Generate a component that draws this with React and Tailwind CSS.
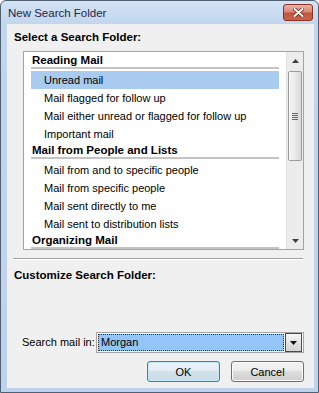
import React from "react";

const groups = [
  {
    title: "Reading Mail",
    items: [
      "Unread mail",
      "Mail flagged for follow up",
      "Mail either unread or flagged for follow up",
      "Important mail",
    ],
  },
  {
    title: "Mail from People and Lists",
    items: [
      "Mail from and to specific people",
      "Mail from specific people",
      "Mail sent directly to me",
      "Mail sent to distribution lists",
    ],
  },
  { title: "Organizing Mail", items: [] },
];

function Arrow({ down }) {
  return (
    <svg width="7" height="4" viewBox="0 0 7 4">
      {down ? <polygon points="0,0 7,0 3.5,4" fill="#3e3e3e" /> : <polygon points="0,4 7,4 3.5,0" fill="#3e3e3e" />}
    </svg>
  );
}

function Scrollbar() {
  return (
    <div className="flex w-[17px] flex-col border-l border-[#e2e2e2] bg-[#ececec]">
      <div className="flex h-[17px] items-center justify-center">
        <Arrow />
      </div>
      {/* thumb */}
      <div className="mt-[2px] ml-[1px] flex h-[90px] w-[14px] items-center justify-center rounded-[2px] border border-[#9b9b9b] bg-[linear-gradient(90deg,#f6f6f6,#e9e9e9_50%,#dadada)]">
        <div className="flex flex-col gap-[1px]">
          <div className="h-[1px] w-[6px] bg-[#666]" />
          <div className="h-[1px] w-[6px] bg-[#666]" />
          <div className="h-[1px] w-[6px] bg-[#666]" />
          <div className="h-[1px] w-[6px] bg-[#666]" />
        </div>
      </div>
      <div className="flex-1" />
      <div className="flex h-[17px] items-center justify-center">
        <Arrow down />
      </div>
    </div>
  );
}

export default function App() {
  return (
    <div className="h-[393px] w-[319px] font-['Liberation_Sans',Arial,sans-serif] text-[11px] text-black">
      <div className="flex h-[393px] w-[319px] flex-col rounded-t-[6px] border border-[#505f72] bg-[linear-gradient(180deg,#d3e3f4_0px,#c1d6ed_23px,#bdd2eb_100%)] pb-[4px] pl-[6px] pr-[4px]">
        {/* Title bar */}
        <div className="flex h-[23px] items-start">
          <div className="pt-[4px] pl-[1px] text-[11.5px] leading-[16px] text-[#27234d]">New Search Folder</div>
          <div className="mt-[3px] mr-[1px] ml-auto flex h-[17px] w-[30px] items-center justify-center rounded-[3px] border border-[#8c3324] bg-[linear-gradient(180deg,#eab2a4,#d9897a_45%,#c4533b_55%,#c9634c)]">
            <svg width="11" height="9" viewBox="0 0 11 9">
              <path d="M1.5 1 L9.5 8 M9.5 1 L1.5 8" stroke="#6b2418" strokeWidth="3.6" strokeLinecap="round" />
              <path d="M1.5 1 L9.5 8 M9.5 1 L1.5 8" stroke="#ffffff" strokeWidth="2" strokeLinecap="round" />
            </svg>
          </div>
        </div>

        {/* Content */}
        <div className="flex flex-1 flex-col bg-[#f0f0f0]">
          <div className="h-[27px] pt-[6px] pl-[7px] text-[11.5px] font-bold leading-[14px]">Select a Search Folder:</div>

          {/* List box */}
          <div className="ml-[16px] flex h-[199px] w-[281px] border border-[#a3a3a3] bg-white">
            <div className="w-[262px] overflow-hidden px-[7px] pt-[1px]">
              {groups.map((g) => (
                <div key={g.title}>
                  <div className="h-[18px]">
                    <div className="h-[14px] pl-[1px] text-[11.5px] font-bold whitespace-nowrap leading-[14px]">{g.title}</div>
                    <div className="h-[2px] bg-[#c4c4c4]" />
                  </div>
                  {g.items.map((item) => (
                    <div
                      key={item}
                      className={`h-[18px] pl-[13px] whitespace-nowrap leading-[18px] ${
                        item === "Unread mail" ? "bg-[#aacbf0]" : ""
                      }`}
                    >
                      {item}
                    </div>
                  ))}
                </div>
              ))}
            </div>
            <Scrollbar />
          </div>

          {/* Divider */}
          <div className="mt-[8px] ml-[6px] w-[290px] border-t border-b border-t-[#a0a0a0] border-b-white" />

          <div className="mt-[8px] h-[14px] pl-[7px] text-[11.5px] font-bold leading-[14px]">Customize Search Folder:</div>

          {/* Search mail in */}
          <div className="mt-[50px] mr-[10px] flex h-[21px] items-center">
            <span className="pl-[15px]">Search mail in:</span>
            <div className="ml-auto flex h-[21px] w-[208px] items-center border border-[#a5a5a5] bg-white p-[1px]">
              <div className="flex h-full flex-1 items-center border border-dotted border-[#333] bg-[#93c5f9] pl-[2px]">
                Morgan
              </div>
              <div className="ml-[1px] flex h-[19px] w-[17px] items-center justify-center border border-[#4a4a4a] bg-[linear-gradient(180deg,#f6f6f6,#e3e3e3_50%,#d4d4d4)]">
                <svg width="7" height="4" viewBox="0 0 7 4">
                  <polygon points="0,0 7,0 3.5,4" fill="#111" />
                </svg>
              </div>
            </div>
          </div>

          {/* Buttons */}
          <div className="mt-[8px] mr-[10px] flex justify-end gap-[11px]">
            <button className="h-[21px] w-[73px] rounded-[3px] border border-[#3c7fb1] bg-[linear-gradient(180deg,#ecf4f9,#e2edf4_50%,#d2e1eb_50%,#c9dbe7)] shadow-[inset_0_0_0_1px_#c6e7f8] leading-[18px]">
              OK
            </button>
            <button className="h-[21px] w-[73px] rounded-[3px] border border-[#707070] bg-[linear-gradient(180deg,#f3f3f3,#ebebeb_50%,#dddddd_50%,#cfcfcf)] shadow-[inset_0_0_0_1px_#fbfbfb] leading-[18px]">
              Cancel
            </button>
          </div>
        </div>
      </div>
    </div>
  );
}
